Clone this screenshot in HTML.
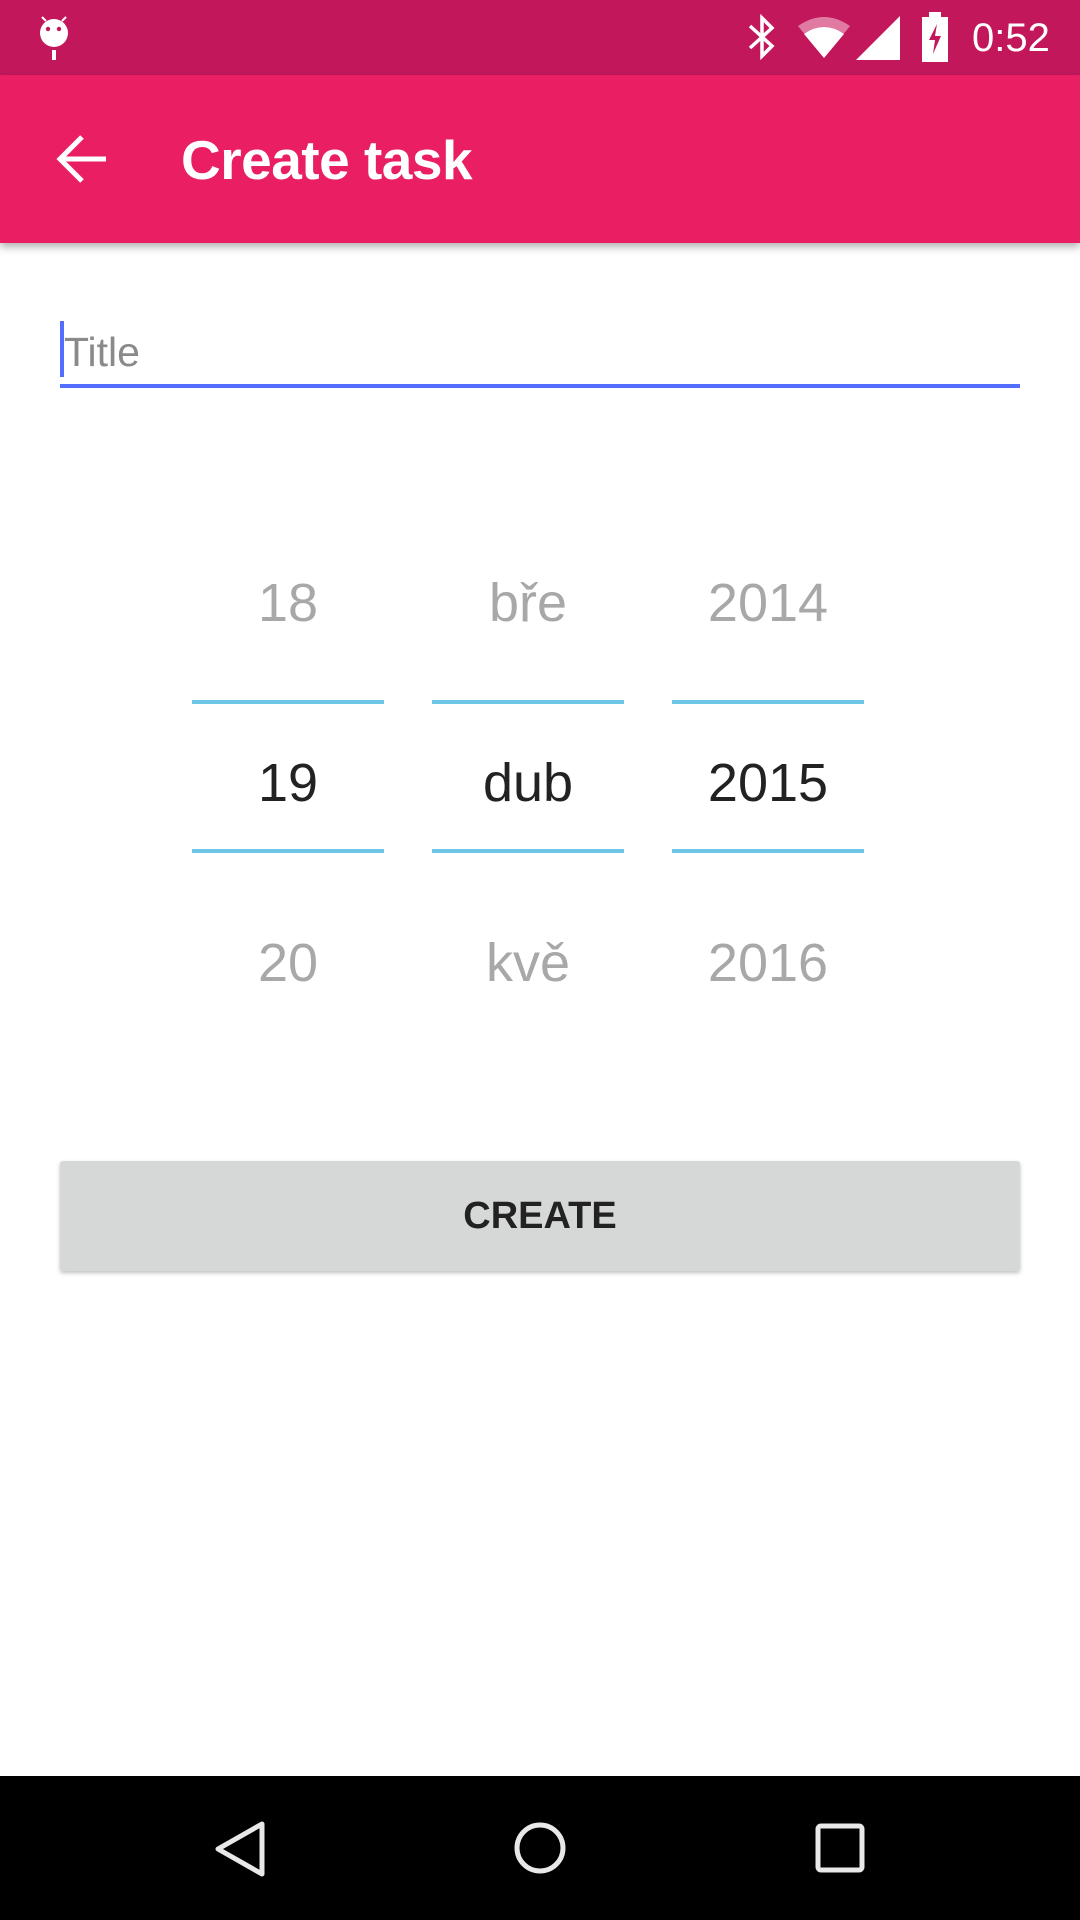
<!DOCTYPE html>
<html><head><meta charset="utf-8"><style>
*{margin:0;padding:0;box-sizing:border-box}
body{width:1080px;height:1920px;position:relative;background:#fff;font-family:"Liberation Sans",sans-serif;overflow:hidden}
.abs{position:absolute}
.sb{left:0;top:0;width:1080px;height:75px;background:#C2185B}
.ab{left:0;top:75px;width:1080px;height:168px;background:#E91E63;box-shadow:0 4px 8px rgba(0,0,0,.3)}
.t{font-size:55px;font-weight:bold;color:#fff;left:181px;top:128px;line-height:64px;letter-spacing:-0.5px}
.col{width:192px;text-align:center;font-size:54px;line-height:70px}
.g{color:#a8a8a8}.k{color:#222}
.ln{height:4px;width:192px;background:#6EC6E6}
</style></head><body>
<div class="abs sb"></div>
<svg class="abs" style="left:36px;top:14px" width="36" height="48" viewBox="0 0 36 48"><circle cx="18" cy="19" r="14" fill="#fff"/><line x1="6" y1="3" x2="10" y2="7" stroke="#fff" stroke-width="2"/><line x1="30" y1="3" x2="26" y2="7" stroke="#fff" stroke-width="2"/><circle cx="12" cy="15" r="2.2" fill="#C2185B"/><circle cx="23" cy="15" r="2.2" fill="#C2185B"/><rect x="16" y="36" width="4" height="10" fill="#fff"/></svg>
<svg class="abs" style="left:746px;top:14px" width="32" height="46" viewBox="0 0 32 46"><path d="M4 12 L26 32 L16 42 L16 4 L26 14 L4 34" fill="none" stroke="#fff" stroke-width="3.5"/></svg>
<svg class="abs" style="left:796px;top:16px" width="56" height="44" viewBox="0 0 56 44"><path d="M2 10 Q28 -8 54 10 L28 42 Z" fill="#e07aa2"/><path d="M8 18 Q28 4 48 18 L28 42 Z" fill="#fff"/></svg>
<svg class="abs" style="left:856px;top:16px" width="44" height="44"><path d="M44 0 L44 44 L0 44 Z" fill="#fff"/></svg>
<svg class="abs" style="left:920px;top:12px" width="30" height="50" viewBox="0 0 30 50"><rect x="9" y="0" width="12" height="6" fill="#fff"/><rect x="2" y="5" width="26" height="45" fill="#fff"/><path d="M17 12 L9 28 L15 28 L13 42 L21 24 L15 24 Z" fill="#C2185B"/></svg>
<div class="abs" style="left:972px;top:14px;font-size:40px;color:#fff;line-height:48px">0:52</div>
<div class="abs ab"></div>
<svg class="abs" style="left:56px;top:133px" width="52" height="52" viewBox="0 0 52 52"><path d="M50 26 L6 26 M26 4 L4 26 L26 48" fill="none" stroke="#fff" stroke-width="5"/></svg>
<div class="abs t">Create task</div>
<div class="abs" style="left:60px;top:321px;width:4px;height:56px;background:#536DFE"></div>
<div class="abs" style="left:64px;top:328px;font-size:41px;color:#8a8a8a;line-height:48px">Title</div>
<div class="abs" style="left:60px;top:384px;width:960px;height:4px;background:#536DFE"></div>
<div class="abs col g" style="left:192px;top:568px">18</div>
<div class="abs col g" style="left:432px;top:568px">bře</div>
<div class="abs col g" style="left:672px;top:568px">2014</div>
<div class="abs ln" style="left:192px;top:700px"></div>
<div class="abs ln" style="left:432px;top:700px"></div>
<div class="abs ln" style="left:672px;top:700px"></div>
<div class="abs col k" style="left:192px;top:748px">19</div>
<div class="abs col k" style="left:432px;top:748px">dub</div>
<div class="abs col k" style="left:672px;top:748px">2015</div>
<div class="abs ln" style="left:192px;top:849px"></div>
<div class="abs ln" style="left:432px;top:849px"></div>
<div class="abs ln" style="left:672px;top:849px"></div>
<div class="abs col g" style="left:192px;top:928px">20</div>
<div class="abs col g" style="left:432px;top:928px">kvě</div>
<div class="abs col g" style="left:672px;top:928px">2016</div>
<div class="abs" style="left:60px;top:1161px;width:960px;height:110px;background:#D6D7D7;border-radius:3px;box-shadow:0 2px 4px rgba(0,0,0,.25);text-align:center;line-height:110px;font-size:38px;font-weight:bold;color:#222">CREATE</div>
<div class="abs" style="left:0;top:1776px;width:1080px;height:144px;background:#000"></div>
<svg class="abs" style="left:210px;top:1820px" width="60" height="58" viewBox="0 0 60 58"><path d="M52 4 L52 54 L8 29 Z" fill="none" stroke="#e8e8e8" stroke-width="5" stroke-linejoin="round"/></svg>
<svg class="abs" style="left:512px;top:1820px" width="56" height="56"><circle cx="28" cy="28" r="23" fill="none" stroke="#e8e8e8" stroke-width="5"/></svg>
<svg class="abs" style="left:814px;top:1822px" width="52" height="52"><rect x="4" y="4" width="44" height="44" rx="3" fill="none" stroke="#e8e8e8" stroke-width="5"/></svg>
</body></html>
